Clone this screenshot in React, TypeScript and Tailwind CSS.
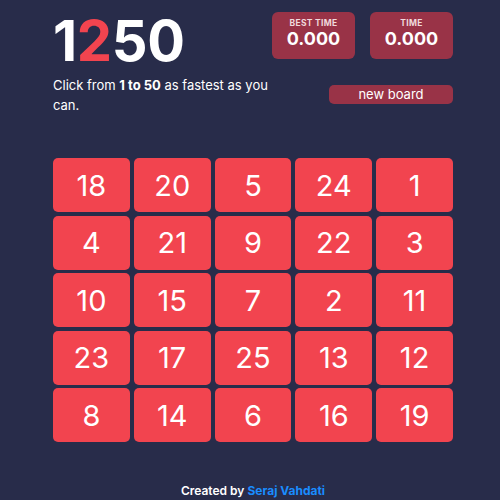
const board = [18, 20, 5, 24, 1, 4, 21, 9, 22, 3, 10, 15, 7, 2, 11, 23, 17, 25, 13, 12, 8, 14, 6, 16, 19]

export default function App() {
  return (
    <div className="w-[500px] h-[500px] bg-[#282c4a] text-white flex flex-col pl-[53px]" style={{ fontFamily: 'Inter, "Noto Sans", sans-serif' }}>
      <div className="w-[400px] flex justify-between pt-[12px]">
        <div className="flex flex-col">
          <h1 className="text-[56px] font-bold leading-[56px] tracking-[-0.3px] mt-[1px]">
            1<span className="text-[#f2444f]">2</span>50
          </h1>
          <p className="w-[215px] text-[13px] leading-[20px] mt-[6px]">
            Click from <b>1 to 50</b> as fastest as you can.
          </p>
        </div>
        <div className="flex flex-col items-end">
          <div className="flex gap-[15px]">
            <div className="w-[83px] h-[47px] rounded-[6px] bg-[#993347] flex flex-col items-center pt-[6px]">
              <span className="text-[8.5px] font-bold leading-[10px] tracking-[0.3px] text-[#f0d9dd]">BEST TIME</span>
              <span className="text-[18px] font-bold leading-[22px]">0.000</span>
            </div>
            <div className="w-[83px] h-[47px] rounded-[6px] bg-[#993347] flex flex-col items-center pt-[6px]">
              <span className="text-[8.5px] font-bold leading-[10px] tracking-[0.3px] text-[#f0d9dd]">TIME</span>
              <span className="text-[18px] font-bold leading-[22px]">0.000</span>
            </div>
          </div>
          <button className="mt-[26px] w-[124px] h-[19px] rounded-[5px] bg-[#993347] text-[13px] leading-[19px] text-white">
            new board
          </button>
        </div>
      </div>
      <div className="w-[400px] grid grid-cols-5 gap-x-[4px] gap-y-[3.5px] mt-[43px]">
        {board.map((n) => (
          <button key={n} className="h-[54px] rounded-[5px] bg-[#f2444f] text-white text-[29px] leading-none flex items-center justify-center">
            {n}
          </button>
        ))}
      </div>
      <div className="mt-auto mb-[1px] w-[400px] text-center text-[12px] font-semibold leading-[16px]">
        Created by <span className="text-[#1a8cff] font-bold">Seraj Vahdati</span>
      </div>
    </div>
  )
}
